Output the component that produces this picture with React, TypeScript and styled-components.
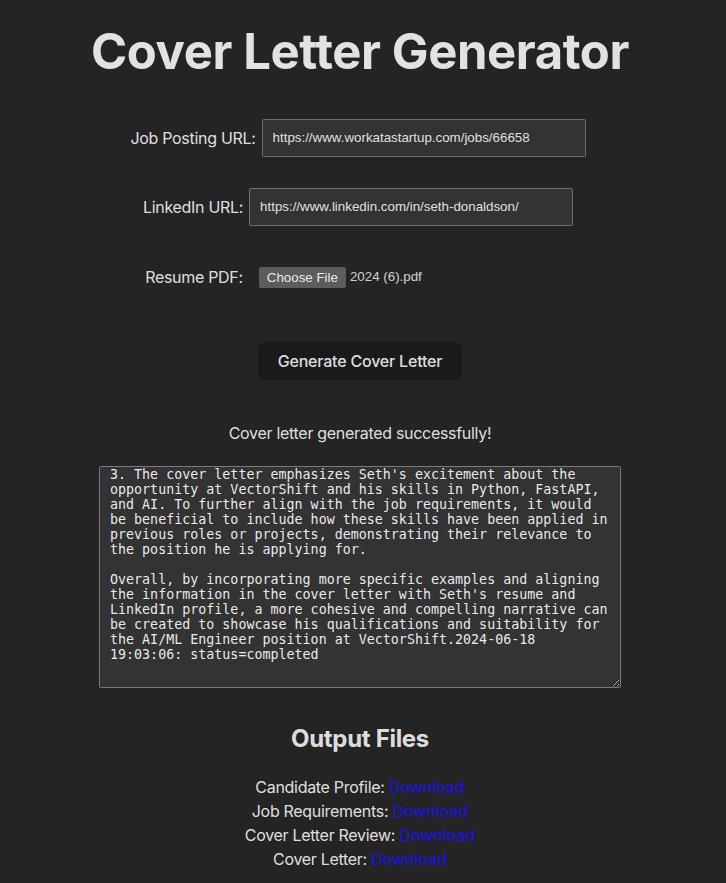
import * as React from 'react';
import styled, { createGlobalStyle } from 'styled-components';

const GlobalStyle = createGlobalStyle`
  body {
    margin: 0;
    background-color: #242424;
    color: rgba(255, 255, 255, 0.87);
    font-family: Inter, "Noto Sans", sans-serif;
    font-size: 16px;
    line-height: 1.5;
    letter-spacing: -0.3px;
  }
`;

const Page = styled.div`
  display: flex;
  flex-direction: column;
  align-items: center;
  padding: 25px 6px 0 0;
  text-align: center;
`;

const Title = styled.h1`
  margin: 0 0 40px;
  font-size: 49px;
  line-height: 1.1;
  font-weight: 700;
  letter-spacing: -0.4px;
`;

const Form = styled.form`
  display: flex;
  flex-direction: column;
  align-items: center;
  gap: 31px;
`;

const Row = styled.div`
  display: flex;
  align-items: center;
  gap: 6px;
  margin-right: 4px;
`;

const Label = styled.label`
  font-size: 16px;
`;

const TextInput = styled.input`
  box-sizing: content-box;
  width: 302px;
  padding: 10px;
  border: 1px solid #6e6e6e;
  border-radius: 2px;
  background-color: #333333;
  color: rgba(255, 255, 255, 0.87);
  font-family: "Liberation Sans", Arial, sans-serif;
  font-size: 13.33px;
  line-height: 16px;
  letter-spacing: normal;
`;

const FileBox = styled.div`
  width: 302px;
  padding: 10px;
  display: flex;
  align-items: center;
  gap: 4px;
  font-family: "Liberation Sans", Arial, sans-serif;
  font-size: 13.33px;
  letter-spacing: normal;
`;

const FileButton = styled.span`
  padding: 2px 8px;
  background-color: #5c5c5c;
  border-radius: 2px;
  color: rgba(255, 255, 255, 0.9);
  line-height: 17px;
`;

const FileName = styled.span`
  color: rgba(255, 255, 255, 0.8);
`;

const Button = styled.button`
  margin-top: 13px;
  padding: 10px 19px;
  border: 1px solid transparent;
  border-radius: 8px;
  background-color: #1a1a1a;
  color: rgba(255, 255, 255, 0.87);
  font-family: inherit;
  font-size: 16px;
  font-weight: 500;
  line-height: 16px;
  letter-spacing: -0.2px;
  cursor: pointer;
`;

const Status = styled.p`
  margin: 41px 0 21px;
  font-size: 16px;
`;

const Output = styled.textarea`
  box-sizing: border-box;
  width: 522px;
  height: 222px;
  padding: 10px;
  border: 1px solid #7a7a7a;
  border-radius: 2px;
  background-color: #333333;
  color: rgba(255, 255, 255, 0.92);
  font-family: "DejaVu Sans Mono", monospace;
  font-size: 13.33px;
  line-height: 15px;
  letter-spacing: normal;
  scrollbar-width: none;

  &::-webkit-scrollbar {
    display: none;
  }
`;

const SubTitle = styled.h2`
  margin: 37px 0 21px;
  font-size: 24px;
  font-weight: 700;
  line-height: 1.2;
`;

const FileList = styled.div`
  display: flex;
  flex-direction: column;
  font-size: 16px;
  line-height: 24px;
`;

const DownloadLink = styled.a`
  color: #1f10ee;
  text-decoration: none;
  letter-spacing: normal;
`;

const letter = `Feedback on the cover letter:

1. The cover letter highlights Seth's experience as a
software engineer, but it could better connect his past
work with the responsibilities listed in the job posting.

2. The resume mentions several machine learning projects
that are not referenced in the cover letter. Including
one or two of them would strengthen the application.

3. The cover letter emphasizes Seth's excitement about the
opportunity at VectorShift and his skills in Python, FastAPI,
and AI. To further align with the job requirements, it would
be beneficial to include how these skills have been applied in
previous roles or projects, demonstrating their relevance to
the position he is applying for.

Overall, by incorporating more specific examples and aligning
the information in the cover letter with Seth's resume and
LinkedIn profile, a more cohesive and compelling narrative can
be created to showcase his qualifications and suitability for
the AI/ML Engineer position at VectorShift.2024-06-18
19:03:06: status=completed
`;

const files = ['Candidate Profile', 'Job Requirements', 'Cover Letter Review', 'Cover Letter'];

export default function App() {
  const outputRef = React.useRef<HTMLTextAreaElement>(null);

  React.useEffect(() => {
    if (outputRef.current) {
      outputRef.current.scrollTop = outputRef.current.scrollHeight;
    }
  }, []);

  return (
    <Page>
      <GlobalStyle />
      <Title>Cover Letter Generator</Title>
      <Form onSubmit={(e) => e.preventDefault()}>
        <Row>
          <Label>Job Posting URL:</Label>
          <TextInput type="text" defaultValue="https://www.workatastartup.com/jobs/66658" />
        </Row>
        <Row>
          <Label>LinkedIn URL:</Label>
          <TextInput type="text" defaultValue="https://www.linkedin.com/in/seth-donaldson/" />
        </Row>
        <Row>
          <Label>Resume PDF:</Label>
          <FileBox>
            <FileButton>Choose File</FileButton>
            <FileName>2024 (6).pdf</FileName>
          </FileBox>
        </Row>
        <Button type="submit">Generate Cover Letter</Button>
      </Form>
      <Status>Cover letter generated successfully!</Status>
      <Output ref={outputRef} readOnly value={letter} />
      <SubTitle>Output Files</SubTitle>
      <FileList>
        {files.map((name) => (
          <div key={name}>
            {name}: <DownloadLink href="#">Download</DownloadLink>
          </div>
        ))}
      </FileList>
    </Page>
  );
}
